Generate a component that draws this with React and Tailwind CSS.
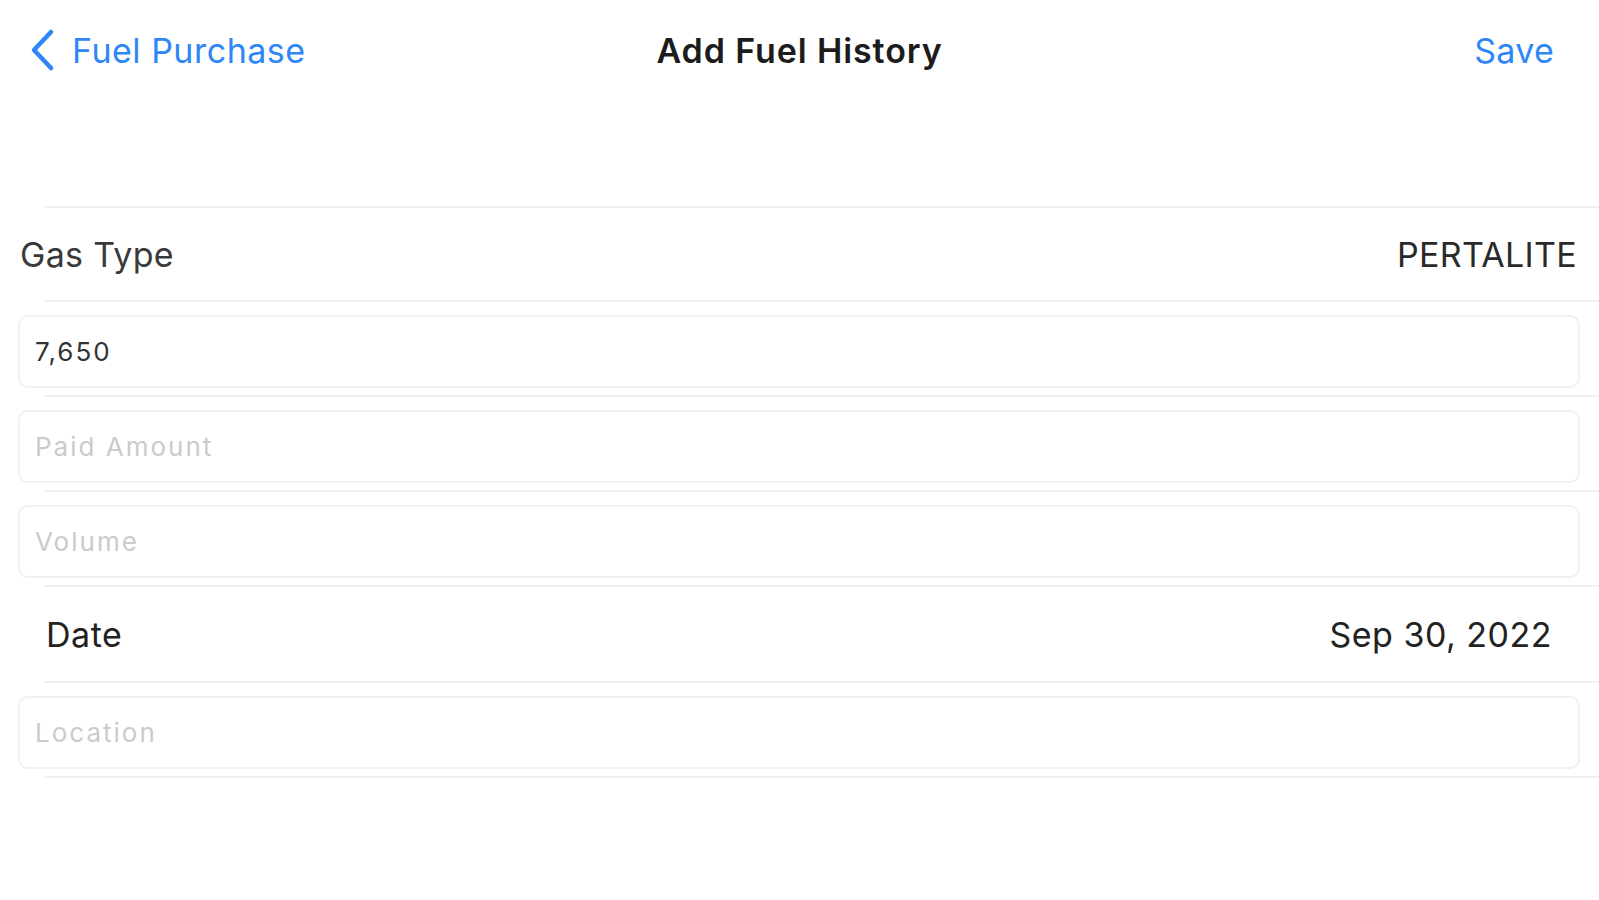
import React, { useState } from "react";

function Separator({ inset = "ml-[45px]" }) {
  return <div className={`h-[2px] bg-[#efefef] ${inset}`} />;
}

function InputRow({ value, placeholder, onChange }) {
  return (
    <div className="h-[93px] pt-[13px] pl-[18px] pr-[19px]">
      <input
        value={value}
        placeholder={placeholder}
        onChange={onChange}
        className="w-full h-[73px] rounded-[10px] border-2 border-[#f1f1f1] bg-white px-[15px] text-[26px] tracking-[2px] text-[#333] placeholder:text-[#cbcbcb] outline-none"
      />
    </div>
  );
}

export default function App() {
  const [price, setPrice] = useState("7,650");
  const [paid, setPaid] = useState("");
  const [volume, setVolume] = useState("");
  const [location, setLocation] = useState("");

  return (
    <div className="w-[1599px] h-[900px] bg-white font-['Inter','Liberation_Sans',sans-serif] overflow-hidden">
      {/* nav bar */}
      <div className="h-[100px] flex items-center justify-between relative px-[28px]">
        <button className="flex items-center gap-[16px] text-[#2f86f6]">
          <svg width="28" height="44" viewBox="0 0 28 44" fill="none">
            <path
              d="M23 4 L6 22 L23 40"
              stroke="#2f86f6"
              strokeWidth="4.5"
              strokeLinecap="round"
              strokeLinejoin="round"
            />
          </svg>
          <span className="text-[34px] tracking-[0.5px]">Fuel Purchase</span>
        </button>
        <div className="absolute left-0 right-0 text-center pointer-events-none text-[34px] font-semibold text-[#1c1c1c] tracking-[0.9px]">
          Add Fuel History
        </div>
        <button className="text-[34px] tracking-[0.3px] text-[#2f86f6] pr-[17px]">Save</button>
      </div>

      <div className="h-[106px]" />

      <Separator />
      <div className="h-[92px] flex items-center justify-between pl-[20px] pr-[22px] text-[34px] tracking-[0.3px]">
        <span className="text-[#3a3a3a]">Gas Type</span>
        <span className="text-[#2a2a2a]">PERTALITE</span>
      </div>

      <Separator />
      <InputRow value={price} placeholder="Price" onChange={(e) => setPrice(e.target.value)} />

      <Separator />
      <InputRow value={paid} placeholder="Paid Amount" onChange={(e) => setPaid(e.target.value)} />

      <Separator />
      <InputRow value={volume} placeholder="Volume" onChange={(e) => setVolume(e.target.value)} />

      <Separator />
      <div className="h-[94px] flex items-center justify-between pl-[46px] pr-[47px] text-[34px] tracking-[0.5px]">
        <span className="text-[#222]">Date</span>
        <span className="text-[#222]">Sep 30, 2022</span>
      </div>

      <Separator />
      <InputRow value={location} placeholder="Location" onChange={(e) => setLocation(e.target.value)} />

      <Separator />
    </div>
  );
}
